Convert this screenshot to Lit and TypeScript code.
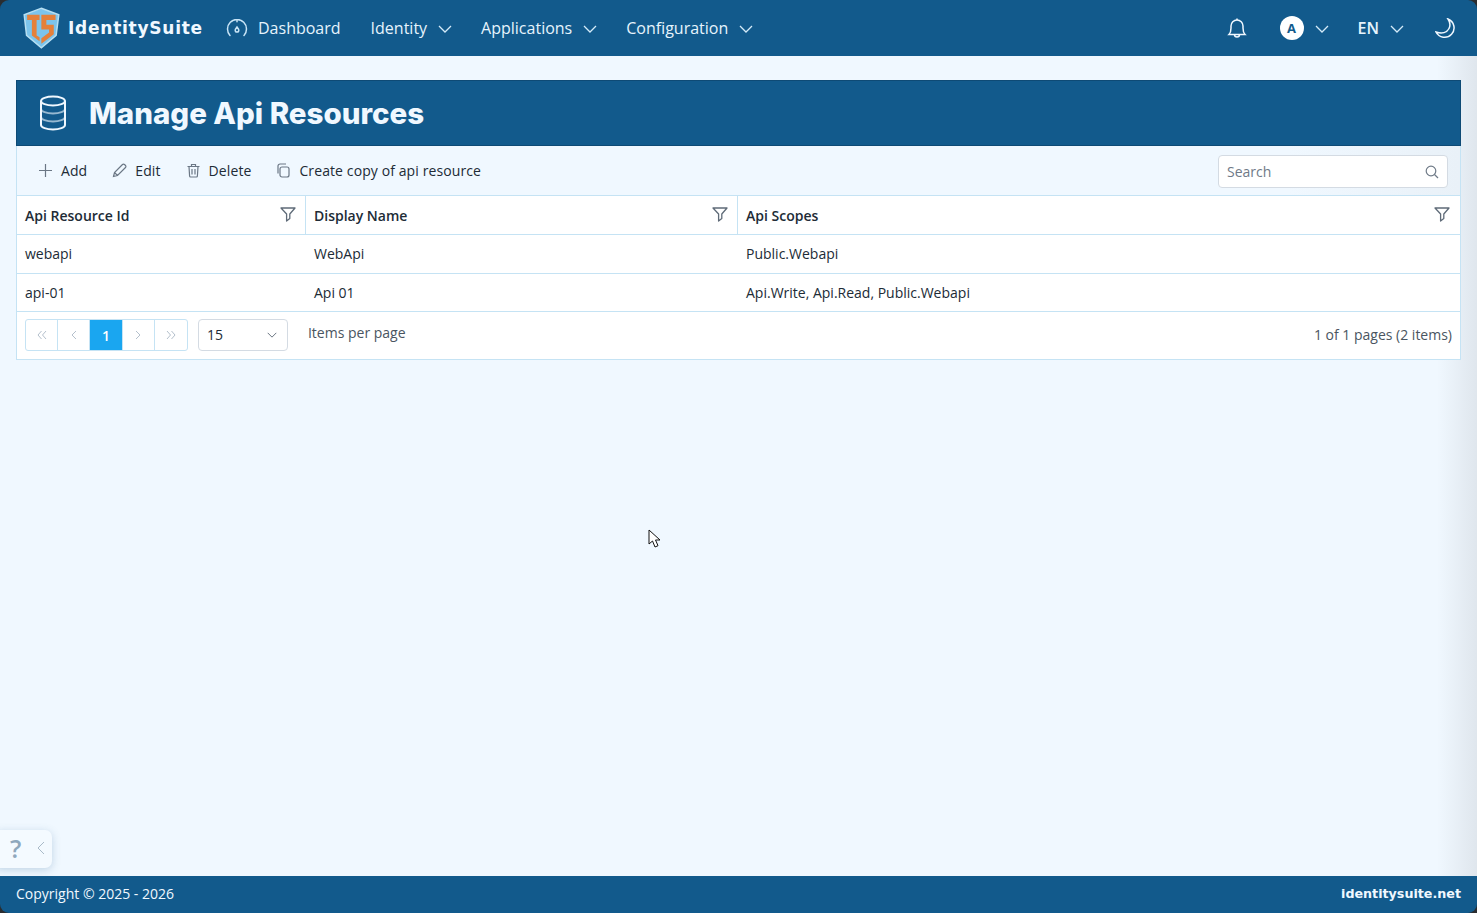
import { LitElement, html, css, svg } from 'lit';
import { customElement } from 'lit/decorators.js';

const chevron = html`<svg class="chev" viewBox="0 0 14 8"><path d="M1 1l6 6 6-6" /></svg>`;
const funnel = html`<svg class="funnel" viewBox="0 0 16 15"><path d="M1 1h14l-5.200 6v4.600L6.600 14V7z" /></svg>`;

const logo = svg`
  <path d="M78 8 137 30 128 100 78 142 28 100 20 30z" fill="#7cc4ec" stroke="#b7dff2" stroke-width="5" />
  <path d="M30 30H72V48H62V100L72 106V120L46 100V48H30z" fill="#e5803a" />
  <path d="M78 30H126V48H95V64H120V96L78 128V110L104 90V80H78z" fill="#e5803a" />
`;

@customElement('app-root')
export class AppRoot extends LitElement {
    static styles = css`
    :host {
      display: block;
      font-family: 'Open Sans', 'Noto Sans', sans-serif;
      color: #212b36;
    }

    .page {
      position: relative;
      height: 913px;
      display: flex;
      flex-direction: column;
      background: #f0f8ff;
      overflow: hidden;
    }

    /* top bar */
    .nav {
      height: 56px;
      flex: none;
      display: flex;
      align-items: center;
      padding: 0 21px 0 22px;
      background: #125a8c;
      color: #e6f4fd;
      font-size: 16px;
    }

    .logo {
      width: 39px;
      height: 42px;
      margin-right: 7px;
    }

    .brand {
      font-family: 'DejaVu Sans', sans-serif;
      font-weight: 700;
      font-size: 17px;
      letter-spacing: 0.75px;
      color: #f0f8ff;
      margin-right: 24px;
      width: 134px;
      white-space: nowrap;
    }

    .nav-item {
      display: flex;
      align-items: center;
      gap: 11px;
      margin-right: 29px;
      white-space: nowrap;
    }

    .nav-item.first {
      gap: 10px;
      margin-right: 30px;
    }

    .chev {
      width: 14px;
      height: 8px;
      fill: none;
      stroke: #d4ebf9;
      stroke-width: 1.3;
      margin-top: 2px;
    }

    .gauge {
      width: 22px;
      height: 18px;
      fill: none;
      stroke: #c8e4f6;
      stroke-width: 1.5;
      stroke-linecap: round;
    }

    .spacer {
      flex: 1;
    }

    .bell {
      width: 22px;
      height: 24px;
      fill: none;
      stroke: #f0f8ff;
      stroke-width: 1.5;
      margin-right: 32px;
    }

    .avatar {
      width: 24px;
      height: 24px;
      border-radius: 50%;
      background: #fff;
      color: #125a8c;
      font-size: 13px;
      font-weight: 700;
      display: flex;
      align-items: center;
      justify-content: center;
      margin-right: 11px;
    }

    .user {
      display: flex;
      align-items: center;
      margin-right: 29px;
    }

    .lang {
      display: flex;
      align-items: center;
      gap: 11px;
      font-weight: 600;
      margin-right: 31px;
    }

    .moon {
      width: 21px;
      height: 21px;
      fill: none;
      stroke: #f0f8ff;
      stroke-width: 1.5;
    }

    /* content */
    .main {
      flex: 1;
      padding: 24px 16px 0;
      background: linear-gradient(to right, #f0f8ff calc(100% - 40px), #dfe6ed);
    }

    .title {
      height: 66px;
      box-sizing: border-box;
      display: flex;
      align-items: center;
      padding: 0 0 1px 21px;
      gap: 21px;
      background: #125a8c;
      border: 1px solid #0e4a75;
      color: #f0f8ff;
      font-family: 'Inter', sans-serif;
      font-size: 29.500px;
      font-weight: 800;
    }

    .db {
      width: 30px;
      height: 36px;
      fill: none;
      stroke: #f0f8ff;
      stroke-width: 2;
    }

    .grid {
      font-size: 14px;
      border: 1px solid #c5e3f4;
      border-top: none;
      background: #fff;
    }

    .toolbar {
      height: 49px;
      display: flex;
      align-items: center;
      padding: 0 12px 0 21px;
      background: linear-gradient(to right, #f0f8ff 88%, #e9f1f8);
      border-bottom: 1px solid #c5e3f4;
    }

    .tool {
      display: flex;
      align-items: center;
      gap: 8px;
      margin-right: 25px;
      letter-spacing: 0.1px;
    }

    .tool svg {
      width: 15px;
      height: 15px;
      fill: none;
      stroke: #6b7785;
      stroke-width: 1.2;
    }

    .search {
      margin-left: auto;
      width: 230px;
      height: 33px;
      margin-top: 2px;
      box-sizing: border-box;
      display: flex;
      align-items: center;
      justify-content: space-between;
      padding: 0 8px;
      background: #fff;
      border: 1px solid #d4dbe3;
      border-radius: 4px;
      color: #6f7a87;
    }

    .search svg {
      width: 14px;
      height: 14px;
      fill: none;
      stroke: #6f7a87;
      stroke-width: 1.2;
    }

    .row {
      display: grid;
      grid-template-columns: 289px 432px 1fr;
      border-bottom: 1px solid #c5e3f4;
      box-sizing: border-box;
    }

    .row.head {
      height: 39px;
      font-weight: 600;
    }

    .row.r1 {
      height: 39px;
      padding-bottom: 2px;
    }

    .row.r2 {
      height: 38px;
    }

    .cell {
      display: flex;
      align-items: center;
      justify-content: space-between;
      padding: 0 9px 0 8px;
      border-right: 1px solid #c5e3f4;
      white-space: nowrap;
    }

    .cell:last-child {
      padding-right: 10px;
    }

    .cell:last-child,
    .row:not(.head) .cell {
      border-right: none;
    }

    .funnel {
      width: 16px;
      height: 15px;
      margin-top: -1px;
      fill: none;
      stroke: #5f6b78;
      stroke-width: 1.3;
      stroke-linejoin: round;
    }

    .pager {
      height: 47px;
      display: flex;
      align-items: center;
      padding: 0 8px;
    }

    .pages {
      display: flex;
      height: 32px;
      box-sizing: border-box;
      border: 1px solid #c5e3f4;
      border-radius: 3px;
      margin-right: 10px;
      margin-bottom: 1px;
    }

    .pages span {
      width: 32.200px;
      box-sizing: border-box;
      display: flex;
      align-items: center;
      justify-content: center;
      border-right: 1px solid #c5e3f4;
      color: #b4c0cc;
      font-size: 16px;
    }

    .pages span:last-child {
      border-right: none;
    }

    .pages span.on {
      background: #1aa6f0;
      color: #fff;
      font-size: 14px;
      font-weight: 600;
    }

    .pages svg {
      width: 10px;
      height: 10px;
      fill: none;
      stroke: #b4c0cc;
      stroke-width: 1;
    }

    .size {
      width: 90px;
      height: 32px;
      box-sizing: border-box;
      margin-bottom: 1px;
      display: flex;
      align-items: center;
      justify-content: space-between;
      padding: 0 10px 2px 8px;
      border: 1px solid #d4dbe3;
      border-radius: 4px;
      margin-right: 20px;
    }

    .size .chev {
      width: 10px;
      height: 6px;
      stroke: #5f6b78;
    }

    .per {
      margin-top: -6px;
      color: #4a5561;
    }

    .total {
      margin-left: auto;
      margin-top: -2px;
      color: #4a5561;
    }

    /* footer */
    .footer {
      height: 37px;
      flex: none;
      display: flex;
      align-items: center;
      justify-content: space-between;
      padding: 0 16px 2px;
      box-sizing: border-box;
      background: #125a8c;
      color: #f0f8ff;
      font-size: 14px;
    }

    .footer b {
      font-family: 'DejaVu Sans', sans-serif;
      font-size: 12.700px;
      font-weight: 700;
    }

    /* floating bits */
    .help {
      position: absolute;
      left: -6px;
      top: 830px;
      width: 58px;
      height: 38px;
      display: flex;
      align-items: center;
      padding: 0 0 2px 16px;
      gap: 16px;
      box-sizing: border-box;
      background: #f4faff;
      border-radius: 7px;
      box-shadow: 0 2px 8px rgba(80, 130, 170, 0.3);
      color: #8fa8bd;
      font-size: 25px;
      font-weight: 600;
    }

    .help svg {
      width: 8px;
      height: 14px;
      fill: none;
      stroke: #a9bac8;
      stroke-width: 1;
    }

    .cursor {
      position: absolute;
      left: 648px;
      top: 529px;
      width: 13px;
      height: 20px;
      fill: #fff;
      stroke: #111;
      stroke-width: 1;
    }

    .corners {
      position: absolute;
      inset: 0;
      border-radius: 9px;
      box-shadow: 0 0 0 12px #2a2d30;
      pointer-events: none;
    }
  `;

    private renderCols(cols: string[], head = false) {
        return cols.map(c => html`<div class="cell"><span>${c}</span>${head ? funnel : ''}</div>`);
    }

    render() {
        return html`
      <div class="page">
        <div class="nav">
          <svg class="logo" viewBox="16 4 125 142">${logo}</svg>
          <span class="brand">IdentitySuite</span>
          <div class="nav-item first">
            <svg class="gauge" viewBox="0 0 22 18">
              <path d="M4 16.500A9.500 9.500 0 0 1 1.500 10 9.500 9.500 0 0 1 20.500 10a9.500 9.500 0 0 1-2.500 6.500" />
              <path d="M11 .8v2M11 8c1.200 1.500 1.800 2.500 1.800 3.300a1.800 1.800 0 0 1-3.600 0C9.200 10.500 9.800 9.500 11 8z" />
            </svg>
            Dashboard
          </div>
          <div class="nav-item">Identity ${chevron}</div>
          <div class="nav-item">Applications ${chevron}</div>
          <div class="nav-item">Configuration ${chevron}</div>
          <div class="spacer"></div>
          <svg class="bell" viewBox="0 0 22 24">
            <path d="M3 18.500c1.500-1.500 2-3 2-6.500V10a6 6 0 0 1 12 0v2c0 3.500.5 5 2 6.500z" />
            <path d="M8.500 18.500a2.500 2.500 0 0 0 5 0M11 4V2.500" />
          </svg>
          <div class="user"><span class="avatar">A</span>${chevron}</div>
          <div class="lang">EN ${chevron}</div>
          <svg class="moon" viewBox="0 0 21 21">
            <path d="M13 1a9.500 9.500 0 1 1-12 13C7 16 12 14.500 14 10.500 15.500 7.500 15 4 13 1z" />
          </svg>
        </div>

        <div class="main">
          <div class="title">
            <svg class="db" viewBox="0 0 30 36">
              <ellipse cx="15" cy="6" rx="12" ry="4.500" />
              <path d="M3 6v24c0 2.500 5.500 4.500 12 4.500s12-2 12-4.500V6" />
              <path d="M3 14c0 2.500 5.500 4.500 12 4.500s12-2 12-4.500" opacity=".6" />
              <path d="M3 22c0 2.500 5.500 4.500 12 4.500s12-2 12-4.500" opacity=".6" />
            </svg>
            Manage Api Resources
          </div>

          <div class="grid">
            <div class="toolbar">
              <div class="tool">
                <svg viewBox="0 0 15 15"><path d="M7.500 1v13M1 7.500h13" /></svg>Add
              </div>
              <div class="tool">
                <svg viewBox="0 0 15 15"><path d="M1.500 13.500l1-4L10.500 1.500a1.400 1.400 0 0 1 2 0l1 1a1.400 1.400 0 0 1 0 2L5.500 12.500zM2.500 9.500l3 3" /></svg>Edit
              </div>
              <div class="tool">
                <svg viewBox="0 0 15 15"><path d="M1.500 3.500h12M5.500 3.500V1.500h4v2M3 3.500l.6 9.500a1 1 0 0 0 1 1h5.800a1 1 0 0 0 1-1l.6-9.500M6 6v5.500M9 6v5.500" /></svg>Delete
              </div>
              <div class="tool">
                <svg viewBox="0 0 15 15"><rect x="4" y="4" width="9" height="10" rx="2" /><path d="M2 10.500V3a2 2 0 0 1 2-2h6" /></svg>Create copy of api resource
              </div>
              <div class="search">
                <span>Search</span>
                <svg viewBox="0 0 14 14"><circle cx="6" cy="6" r="4.800" /><path d="M9.500 9.500L13 13" /></svg>
              </div>
            </div>

            <div class="row head">${this.renderCols(['Api Resource Id', 'Display Name', 'Api Scopes'], true)}</div>
            <div class="row r1">${this.renderCols(['webapi', 'WebApi', 'Public.Webapi'])}</div>
            <div class="row r2">${this.renderCols(['api-01', 'Api 01', 'Api.Write, Api.Read, Public.Webapi'])}</div>

            <div class="pager">
              <div class="pages">
                <span><svg viewBox="0 0 10 10"><path d="M4.500 1L1 5l3.500 4M9 1L5.500 5 9 9" /></svg></span>
                <span><svg viewBox="0 0 10 10"><path d="M7 1L3 5l4 4" /></svg></span>
                <span class="on">1</span>
                <span><svg viewBox="0 0 10 10"><path d="M3 1l4 4-4 4" /></svg></span>
                <span><svg viewBox="0 0 10 10"><path d="M1 1l3.500 4L1 9M5.500 1L9 5 5.500 9" /></svg></span>
              </div>
              <div class="size"><span>15</span>${chevron}</div>
              <span class="per">Items per page</span>
              <span class="total">1 of 1 pages (2 items)</span>
            </div>
          </div>
        </div>

        <div class="footer">
          <span>Copyright © 2025 - 2026</span>
          <b>identitysuite.net</b>
        </div>

        <div class="help">?
          <svg viewBox="0 0 8 14"><path d="M7 1L1 7l6 6" /></svg>
        </div>
        <svg class="cursor" viewBox="0 0 13 20"><path d="M1 1v14l3.500-3 2.500 6 3-1.300-2.500-5.700H12z" /></svg>
        <div class="corners"></div>
      </div>
    `;
    }
}

declare global {
    interface HTMLElementTagNameMap {
        'app-root': AppRoot;
    }
}
